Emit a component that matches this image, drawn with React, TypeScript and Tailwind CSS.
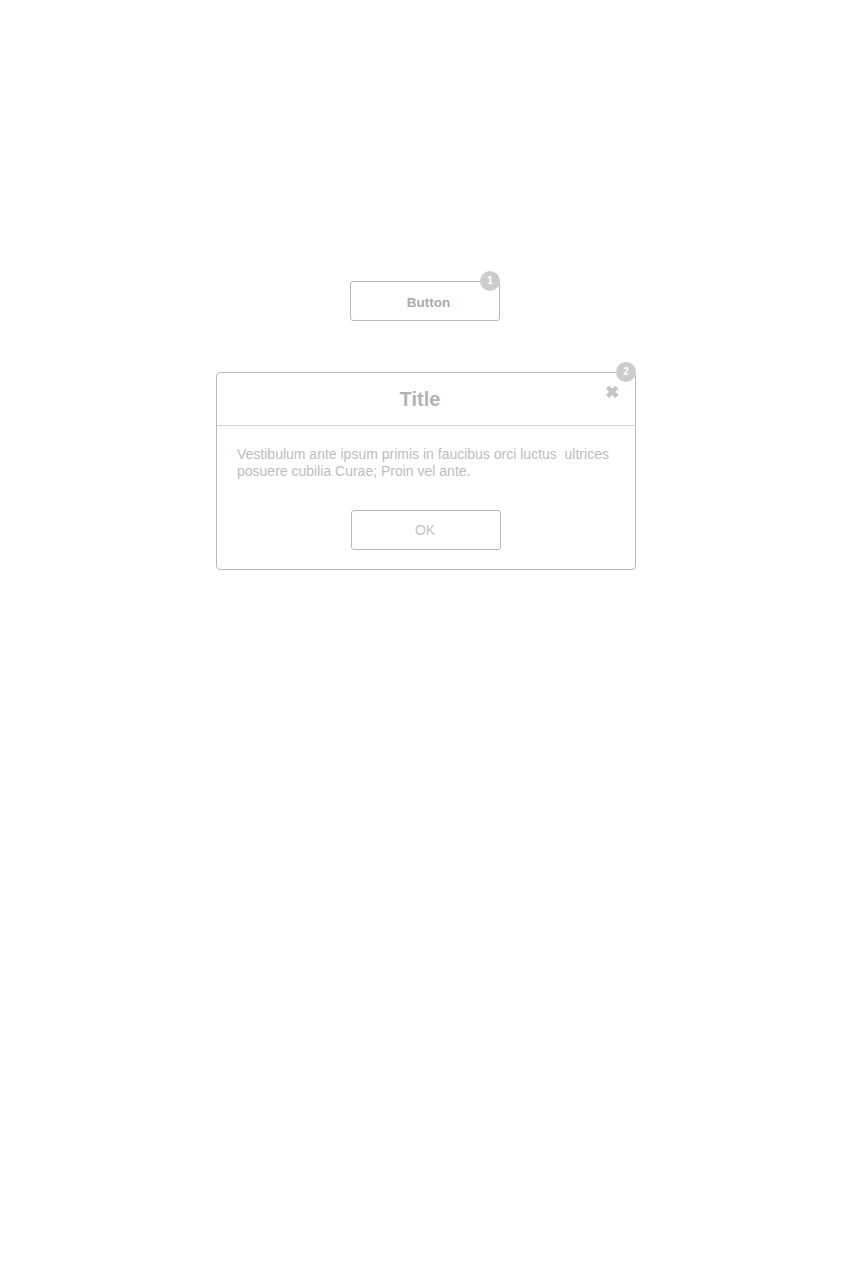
const Badge = ({ n, className }: { n: number; className: string }) => (
  <span
    className={`absolute w-5 h-5 rounded-full bg-[#cccccc] text-white text-[10px] font-bold flex items-center justify-center leading-none ${className}`}
  >
    {n}
  </span>
);

const App = () => {
  return (
    <div className="min-h-[1280px] bg-white pt-[281px] flex flex-col items-center font-['Liberation_Sans',Arial,sans-serif]">
      <div className="relative">
        <button className="w-[150px] h-10 pt-[5px] pl-[7px] border border-[#b8b8b8] rounded-[3px] bg-white text-[13.5px] font-bold text-[#ababab]">
          Button
        </button>
        <Badge n={1} className="-top-[10px] right-0" />
      </div>

      <div className="relative mt-[51px] ml-[2px] w-[420px] border border-[#b8b8b8] rounded-[4px] bg-white">
        <Badge n={2} className="-top-[11px] -right-[1px]" />
        <div className="relative h-[53px] flex items-center justify-center pr-3 border-b border-[#d4d4d4]">
          <h2 className="text-[20px] font-bold text-[#b3b3b3]">Title</h2>
          <span className="absolute right-[16px] top-[11px] text-[17px] font-bold text-[#c4c4c4] leading-none">
            ✖
          </span>
        </div>
        <div className="px-5 pt-[20px] pb-[19px]">
          <p className="text-[14px] leading-[17px] text-[#bdbdbd]">
            Vestibulum ante ipsum primis in faucibus orci luctus&nbsp; ultrices
            posuere cubilia Curae; Proin vel ante.
          </p>
          <div className="mt-[30px] flex justify-center">
            <button className="w-[150px] h-10 pr-[2px] border border-[#b8b8b8] rounded-[3px] bg-white text-[14px] text-[#c4c4c4]">
              OK
            </button>
          </div>
        </div>
      </div>
    </div>
  );
};

export default App;
